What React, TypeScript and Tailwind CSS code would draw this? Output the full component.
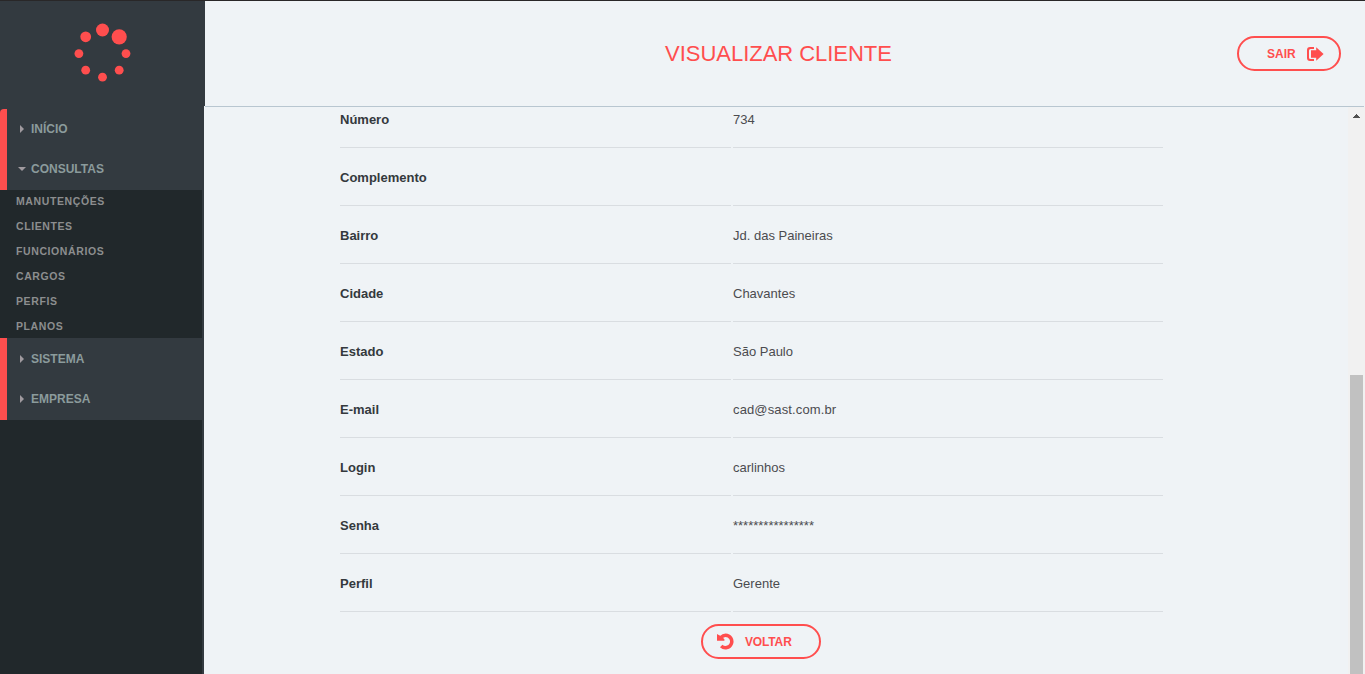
import React from 'react';

const subItems = ['MANUTENÇÕES', 'CLIENTES', 'FUNCIONÁRIOS', 'CARGOS', 'PERFIS', 'PLANOS'];

const fields: { label: string; value: string }[] = [
  { label: 'Número', value: '734' },
  { label: 'Complemento', value: '' },
  { label: 'Bairro', value: 'Jd. das Paineiras' },
  { label: 'Cidade', value: 'Chavantes' },
  { label: 'Estado', value: 'São Paulo' },
  { label: 'E-mail', value: 'cad@sast.com.br' },
  { label: 'Login', value: 'carlinhos' },
  { label: 'Senha', value: '****************' },
  { label: 'Perfil', value: 'Gerente' },
];

function Logo() {
  return (
    <svg width="58" height="60" viewBox="0 0 58 60" fill="#ff4e4e" aria-hidden="true">
      <circle cx="28.5" cy="8" r="6.5" />
      <circle cx="45.2" cy="14.8" r="7.6" />
      <circle cx="11.7" cy="14.8" r="5.4" />
      <circle cx="4.9" cy="31.6" r="4.4" />
      <circle cx="52" cy="31.6" r="4.4" />
      <circle cx="11.7" cy="48.2" r="4.4" />
      <circle cx="45.2" cy="48.2" r="4.4" />
      <circle cx="28.5" cy="55.2" r="4.4" />
    </svg>
  );
}

function MenuItem({ label, open = false }: { label: string; open?: boolean }) {
  return (
    <div className="flex h-10 items-center text-xs font-bold text-[#8b9b9c]">
      <span className="flex w-6 justify-center pl-[5px] pt-px">
        {open ? (
          <svg width="8" height="4" viewBox="0 0 8 4" fill="#a09a9f" className="-mt-px">
            <path d="M0 0h8L4 4z" />
          </svg>
        ) : (
          <svg width="4" height="8" viewBox="0 0 4 8" fill="#a09a9f" className="-mt-px">
            <path d="M0 0v8l4-4z" />
          </svg>
        )}
      </span>
      {label}
    </div>
  );
}

function Sidebar() {
  return (
    <aside className="flex w-[204px] shrink-0 flex-col border-r-2 border-[#333a40] bg-[#21282b]">
      <div className="-mr-[3px] flex h-[105px] justify-center bg-[#333a40] pt-[21px]">
        <Logo />
      </div>
      <div className="h-[3px] bg-[#333a40]" />
      <div className="bg-[#333a40]">
        <div className="h-[81px] rounded-tl border-l-[7px] border-[#ff4e4e]">
          <MenuItem label="INÍCIO" />
          <MenuItem label="CONSULTAS" open />
        </div>
      </div>
      <ul className="h-[148px] overflow-hidden pl-4 text-[10.5px] font-bold leading-[25px] tracking-[0.6px] text-[#8c8e8f]">
        {subItems.map((s) => (
          <li key={s} className="-mt-px mb-px">
            {s}
          </li>
        ))}
      </ul>
      <div className="h-[82px] border-l-[7px] border-[#ff4e4e] bg-[#333a40] pt-px">
        <MenuItem label="SISTEMA" />
        <MenuItem label="EMPRESA" />
      </div>
    </aside>
  );
}

function LogoutIcon() {
  return (
    <svg width="17" height="14" viewBox="0 0 17 14" fill="#ff4e4e" aria-hidden="true">
      <path d="M7 0H3a3 3 0 0 0-3 3v8a3 3 0 0 0 3 3h4v-2H3.500A1.500 1.500 0 0 1 2 10.500V3.500A1.500 1.500 0 0 1 3.500 2H7z" />
      <path d="M4 3.300h5.200V.200L16.600 7 9.200 13.800V10.700H4z" />
    </svg>
  );
}

function UndoIcon() {
  return (
    <svg width="17" height="17" viewBox="0 0 17 17" fill="none" aria-hidden="true">
      <path d="M4 4.400C5.500 2.800 7 2.300 8.600 2.300A6.200 6.200 0 1 1 4.200 12.900" stroke="#ff4e4e" strokeWidth="3.500" />
      <path d="M0 .900 2.200 2.200 4.400 3.200 7.400 6.300V7.800H0z" fill="#ff4e4e" />
    </svg>
  );
}

export default function App() {
  return (
    <div className="flex h-[674px] w-[1365px] flex-col overflow-hidden border-t border-[#292728] bg-[#eff3f6] font-['Liberation_Sans',Arial,sans-serif]">
      <div className="flex min-h-0 flex-1">
        <Sidebar />
        <div className="flex min-w-0 flex-1 flex-col">
          <header className="ml-px mr-px grid h-[106px] shrink-0 grid-cols-[1fr_auto_1fr] items-center border-b border-[#b8c6d0] pl-[11px] pr-[23px]">
            <span />
            <h1 className="text-[22px] leading-8 tracking-[-0.03px] text-[#ff4e4e]">VISUALIZAR CLIENTE</h1>
            <button className="flex h-[35px] w-[104px] items-center justify-self-end rounded-full border-2 border-[#ff4e4e] pl-7 text-xs font-bold text-[#ff4e4e]">
              <span className="w-10 text-left">SAIR</span>
              <LogoutIcon />
            </button>
          </header>
          <div className="flex min-h-0 flex-1">
            <main className="flex min-w-0 flex-1 flex-col">
              <div className="-mt-[17px] ml-[136px] w-[823px] [clip-path:inset(17px_0_0_0)]">
                {fields.map((f) => (
                  <div key={f.label} className="grid h-[58px] grid-cols-[391px_430px] gap-x-0.5 text-[13px]">
                    <div className="flex items-center border-b border-[#d9dde1] pt-0.5 font-bold text-[#34393d]">{f.label}</div>
                    <div className="flex items-center border-b border-[#d9dde1] pt-0.5 text-[#4b4b4f]">
                      <span className={f.value.includes('@') ? 'tracking-[0.13px]' : ''}>{f.value}</span>
                    </div>
                  </div>
                ))}
              </div>
              <button className="ml-[497px] mt-3 flex h-[35px] w-[120px] items-center rounded-full border-2 border-[#ff4e4e] pl-3.5 text-xs font-bold text-[#ff4e4e]">
                <span className="w-7">
                  <UndoIcon />
                </span>
                <span className="tracking-[-0.15px]">VOLTAR</span>
              </button>
            </main>
            <div className="flex w-[17px] flex-col bg-[#f1f1f1] pr-0.5">
              <div className="flex h-[17px] items-center justify-center pl-0.5">
                <svg width="7" height="4" viewBox="0 0 7 4" fill="#505050" shapeRendering="crispEdges">
                  <path d="M3 0h1v1h1v1h1v1h1v1H0V3h1V2h1V1h1z" />
                </svg>
              </div>
              <div className="ml-0.5 mt-[251px] flex-1 bg-[#c1c1c1]" />
            </div>
          </div>
        </div>
      </div>
    </div>
  );
}
